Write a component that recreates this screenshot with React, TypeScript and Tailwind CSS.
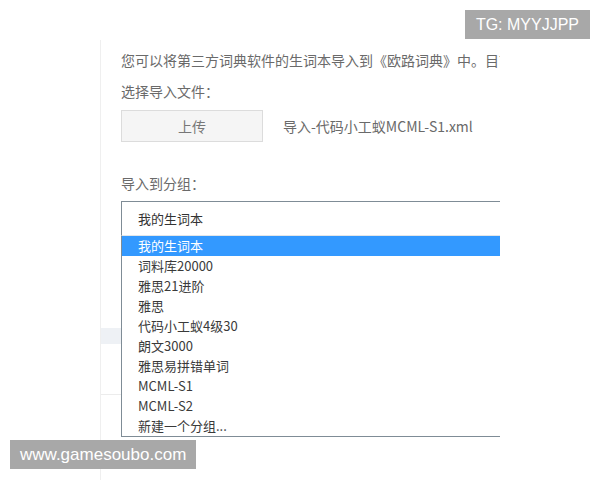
const groups = [
  "我的生词本",
  "词料库20000",
  "雅思21进阶",
  "雅思",
  "代码小工蚁4级30",
  "朗文3000",
  "雅思易拼错单词",
  "MCML-S1",
  "MCML-S2",
  "新建一个分组...",
]

const font = {
  fontFamily: '"Noto Sans CJK SC", "Microsoft YaHei", sans-serif',
}

const App = () => {
  return (
    <div className="relative w-[600px] h-[480px] overflow-hidden bg-white" style={font}>
      <div className="ml-[100px] mt-[40px] w-[400px] h-[440px] overflow-hidden border-l border-[#efefef] pl-[20px] text-[#6a6a6a]">
        <p className="pt-[10px] text-[14px] leading-[20px] whitespace-nowrap">
          您可以将第三方词典软件的生词本导入到《欧路词典》中。目前
        </p>
        <p className="mt-[11px] text-[14px] leading-[20px]">选择导入文件：</p>
        <div className="mt-[9px] flex items-center">
          <button className="w-[142px] h-[32px] border border-[#dcdcdc] bg-[#f5f5f5] text-[14px] text-[#777]">
            上传
          </button>
          <span className="ml-[20px] text-[14px] leading-[20px]">
            导入-代码小工蚁MCML-S1.xml
          </span>
        </div>
        <p className="mt-[31px] text-[14px] leading-[20px]">导入到分组：</p>

        <div className="relative mt-[8px] w-[420px]">
          <div className="h-[34px] border-t border-l border-[#7f8c96] bg-white pl-[16px] pt-[8px] text-[13px] leading-[18px] text-[#333]">
            我的生词本
          </div>
          {/* open option list */}
          <ul className="absolute left-0 top-[34px] z-10 w-full border border-[#7f8c96] border-t-[#e3e6e8] bg-white text-[13px] leading-[20px] text-[#3a3a3a]">
            {groups.map((g, i) => (
              <li
                key={g}
                className={
                  i === 0
                    ? "h-[20px] bg-[#3399ff] pl-[16px] text-white"
                    : "h-[20px] pl-[16px]"
                }
              >
                {g}
              </li>
            ))}
          </ul>
          {/* rows of the table underneath */}
          <div className="-ml-[20px] mt-[93px] h-[16px] bg-[#eef1f5]" />
          <div className="-ml-[20px] mt-[50px] h-px bg-[#ececec]" />
        </div>
      </div>

      <div className="absolute right-[10px] top-[10px] bg-[#a8a8a8] px-[11px] py-[4px] text-[16px] leading-[21px] text-white" style={{ fontFamily: '"Liberation Sans", Arial, sans-serif' }}>
        TG: MYYJJPP
      </div>
      <div className="absolute left-[10px] top-[440px] bg-[#a8a8a8] px-[10px] py-[4px] text-[17px] leading-[21px] text-white" style={{ fontFamily: '"Liberation Sans", Arial, sans-serif' }}>
        www.gamesoubo.com
      </div>
    </div>
  )
}

export default App
